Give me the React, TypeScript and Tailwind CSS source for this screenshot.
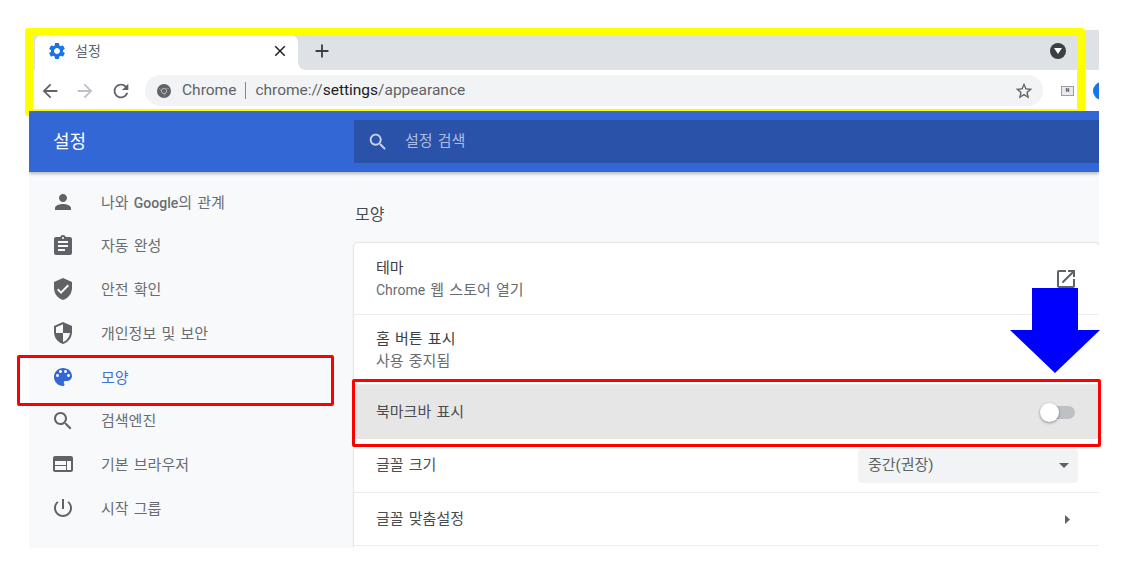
const ICONS = {
  person: 'M12 12c2.21 0 4-1.79 4-4s-1.79-4-4-4-4 1.79-4 4 1.79 4 4 4zm0 2c-2.67 0-8 1.34-8 4v2h16v-2c0-2.66-5.33-4-8-4z',
  assignment:
    'M19 3h-4.18C14.4 1.84 13.3 1 12 1c-1.3 0-2.4.84-2.82 2H5c-1.1 0-2 .9-2 2v14c0 1.1.9 2 2 2h14c1.1 0 2-.9 2-2V5c0-1.1-.9-2-2-2zm-7 0c.55 0 1 .45 1 1s-.45 1-1 1-1-.45-1-1 .45-1 1-1zm2 14H7v-2h7v2zm3-4H7v-2h10v2zm0-4H7V7h10v2z',
  verified:
    'M12 1L3 5v6c0 5.55 3.84 10.74 9 12 5.16-1.26 9-6.45 9-12V5l-9-4zm-2 16l-4-4 1.41-1.41L10 14.17l6.59-6.59L18 9l-8 8z',
  security:
    'M12 1L3 5v6c0 5.55 3.84 10.74 9 12 5.16-1.26 9-6.45 9-12V5l-9-4zm0 10.99h7c-.53 4.12-3.28 7.79-7 8.94V12H5V6.3l7-3.11v8.8z',
  palette:
    'M12 3c-4.97 0-9 4.03-9 9s4.03 9 9 9c.83 0 1.5-.67 1.5-1.5 0-.39-.15-.74-.39-1.01-.23-.26-.38-.61-.38-.99 0-.83.67-1.5 1.5-1.5H16c2.76 0 5-2.24 5-5 0-4.42-4.03-8-9-8zm-5.5 9c-.83 0-1.5-.67-1.5-1.5S5.67 9 6.5 9 8 9.67 8 10.5 7.33 12 6.5 12zm3-4C8.67 8 8 7.33 8 6.5S8.67 5 9.5 5s1.5.67 1.5 1.5S10.33 8 9.5 8zm5 0c-.83 0-1.5-.67-1.5-1.5S13.67 5 14.5 5s1.5.67 1.5 1.5S15.33 8 14.5 8zm3 4c-.83 0-1.5-.67-1.5-1.5S16.67 9 17.5 9s1.5.67 1.5 1.5-.67 1.5-1.5 1.5z',
  search:
    'M15.5 14h-.79l-.28-.27C15.41 12.59 16 11.11 16 9.5 16 5.91 13.09 3 9.5 3S3 5.91 3 9.5 5.91 16 9.5 16c1.61 0 3.09-.59 4.23-1.57l.27.28v.79l5 4.99L20.49 19l-4.99-5zm-6 0C7.01 14 5 11.99 5 9.5S7.01 5 9.5 5 14 7.01 14 9.5 11.99 14 9.5 14z',
  web: 'M20 4H4c-1.1 0-1.99.9-1.99 2L2 18c0 1.1.9 2 2 2h16c1.1 0 2-.9 2-2V6c0-1.1-.9-2-2-2zm-5 14H4v-4h11v4zm0-5H4V9h11v4zm5 5h-4V9h4v9z',
  power:
    'M13 3h-2v10h2V3zm4.83 2.17l-1.42 1.42C17.99 7.86 19 9.81 19 12c0 3.87-3.13 7-7 7s-7-3.13-7-7c0-2.19 1.01-4.14 2.58-5.42L6.17 5.17C4.23 6.82 3 9.26 3 12c0 4.97 4.03 9 9 9s9-4.03 9-9c0-2.74-1.23-5.18-3.17-6.83z',
  gear: 'M19.14 12.94c.04-.3.06-.61.06-.94 0-.32-.02-.64-.07-.94l2.03-1.58a.49.49 0 0 0 .12-.61l-1.92-3.32a.488.488 0 0 0-.59-.22l-2.39.96c-.5-.38-1.03-.7-1.62-.94l-.36-2.54a.484.484 0 0 0-.48-.41h-3.84c-.24 0-.43.17-.47.41l-.36 2.54c-.59.24-1.13.57-1.62.94l-2.39-.96c-.22-.08-.47 0-.59.22L2.74 8.87c-.12.21-.08.47.12.61l2.03 1.58c-.05.3-.09.63-.09.94s.02.64.07.94l-2.03 1.58a.49.49 0 0 0-.12.61l1.92 3.32c.12.22.37.29.59.22l2.39-.96c.5.38 1.03.7 1.62.94l.36 2.54c.05.24.24.41.48.41h3.84c.24 0 .44-.17.47-.41l.36-2.54c.59-.24 1.13-.56 1.62-.94l2.39.96c.22.08.47 0 .59-.22l1.92-3.32c.12-.22.07-.47-.12-.61l-2.01-1.58zM12 15.6c-1.98 0-3.6-1.62-3.6-3.6s1.62-3.6 3.6-3.6 3.6 1.62 3.6 3.6-1.62 3.6-3.6 3.6z',
  external:
    'M19 19H5V5h7V3H5c-1.11 0-2 .9-2 2v14c0 1.1.89 2 2 2h14c1.1 0 2-.9 2-2v-7h-2v7zM14 3v2h3.59l-9.83 9.83 1.41 1.41L19 6.41V10h2V3h-7z',
  back: 'M20 11H7.83l5.59-5.59L12 4l-8 8 8 8 1.41-1.41L7.83 13H20v-2z',
  forward: 'M12 4l-1.41 1.41L16.17 11H4v2h12.17l-5.58 5.59L12 20l8-8z',
  reload:
    'M17.65 6.35C16.2 4.9 14.21 4 12 4c-4.42 0-7.99 3.58-7.99 8s3.57 8 7.99 8c3.73 0 6.84-2.55 7.73-6h-2.08c-.82 2.33-3.04 4-5.65 4-3.31 0-6-2.69-6-6s2.69-6 6-6c1.66 0 3.14.69 4.22 1.78L13 11h7V4l-2.35 2.35z',
  star: 'M22 9.24l-7.19-.62L12 2 9.19 8.63 2 9.24l5.46 4.73L5.82 21 12 17.27 18.18 21l-1.63-7.03L22 9.24zM12 15.4l-3.76 2.27 1-4.28-3.32-2.88 4.38-.38L12 6.1l1.71 4.04 4.38.38-3.32 2.88 1 4.28L12 15.4z',
  close: 'M19 6.41L17.59 5 12 10.59 6.41 5 5 6.41 10.59 12 5 17.59 6.41 19 12 13.41 17.59 19 19 17.59 13.41 12z',
  plus: 'M19 13h-6v6h-2v-6H5v-2h6V5h2v6h6v2z',
};

function Icon({ name, className }: { name: keyof typeof ICONS; className: string }) {
  return (
    <svg viewBox="0 0 24 24" fill="currentColor" className={className}>
      <path d={ICONS[name]} />
    </svg>
  );
}

const NAV: { icon: keyof typeof ICONS; label: React.ReactNode; active?: boolean }[] = [
  {
    icon: 'person',
    label: (
      <>
        나와 <span className="text-[14px] font-medium">Google</span>의 관계
      </>
    ),
  },
  { icon: 'assignment', label: '자동 완성' },
  { icon: 'verified', label: '안전 확인' },
  { icon: 'security', label: '개인정보 및 보안' },
  { icon: 'palette', label: '모양', active: true },
  { icon: 'search', label: '검색엔진' },
  { icon: 'web', label: '기본 브라우저' },
  { icon: 'power', label: '시작 그룹' },
];

function TabStrip() {
  return (
    <div className="flex h-[40px] items-end bg-[#dee1e6] pl-[6px]">
      <div className="flex h-[35px] w-[263px] items-center rounded-t-lg bg-white pb-[3px] pl-[12px] pr-[9px]">
        <Icon name="gear" className="h-[20px] w-[20px] text-[#1a73e8]" />
        <span className="ml-[8px] flex-1 text-[14px] text-[#5f6368]">설정</span>
        <Icon name="close" className="h-[18px] w-[18px] text-[#202124]" />
      </div>
      <div className="relative flex h-[35px] flex-1 items-center pb-[3px] pl-[13px]">
        {/* white notch behind the strip's rounded corner next to the tab */}
        <div className="absolute bottom-0 left-0 h-[8px] w-[8px] bg-white" />
        <div className="absolute bottom-0 left-0 h-[8px] w-[8px] rounded-bl-lg bg-[#dee1e6]" />
        <Icon name="plus" className="h-[22px] w-[22px] text-[#3c4043]" />
        <div className="ml-auto mr-[33px] flex h-[16px] w-[16px] items-center justify-center rounded-full bg-[#3c4043]">
          <svg viewBox="0 0 8 6" className="h-[6px] w-[8px]">
            <path d="M0 0h8L4 6z" fill="#fff" />
          </svg>
        </div>
      </div>
    </div>
  );
}

function Toolbar() {
  return (
    <div className="flex h-[41px] items-start overflow-hidden bg-white pt-[5px]">
      <div className="flex h-[31px] w-[116px] shrink-0 items-center pl-[10px]">
        <Icon name="back" className="h-[22px] w-[22px] text-[#5f6368]" />
        <Icon name="forward" className="ml-[13px] h-[22px] w-[22px] text-[#bdc1c6]" />
        <Icon name="reload" className="ml-[14px] h-[22px] w-[22px] text-[#5f6368]" />
      </div>
      <div className="flex h-[31px] w-[898px] shrink-0 items-center rounded-full bg-[#f1f3f4] pl-[12px] pr-[9px] text-[15.5px]">
        <svg viewBox="0 0 16 16" className="h-[14px] w-[14px]">
          <circle cx="8" cy="8" r="8" fill="#5f6368" />
          <circle cx="8" cy="8" r="3" fill="none" stroke="#c4c7ca" strokeWidth="1" />
          <path d="M8 5h6M5.5 9.5L2.6 4.4M10.5 9.5L7.6 14.6" stroke="#9aa0a6" strokeWidth="0.8" />
        </svg>
        <span className="ml-[11px] text-[#5f6368]">Chrome</span>
        <span className="ml-[9px] h-[17px] w-px bg-[#80868b]" />
        <span className="ml-[9px] text-[#5f6368]">
          chrome://<span className="text-[#202124]">settings</span>/appearance
        </span>
        <Icon name="star" className="ml-auto h-[20px] w-[20px] text-[#5f6368]" />
      </div>
      <div className="flex h-[31px] flex-1 items-center pl-[18px]">
        <div className="flex h-[10px] w-[13px] shrink-0 items-center justify-center border border-[#9aa0a6] bg-[#e8eaed] text-[5px] leading-none font-bold text-[#3c4043]">
          N
        </div>
        <div className="ml-[19px] h-[18px] w-[18px] shrink-0 rounded-full bg-[#1a73e8]" />
      </div>
    </div>
  );
}

function Header() {
  return (
    <div className="relative z-10 flex h-[61px] items-center bg-[#3367d6] shadow-[0_2px_3px_rgba(0,0,0,0.25)]">
      <div className="w-[325px] pl-[24px] text-[18px] text-white">설정</div>
      <div className="flex h-[43px] flex-1 items-center bg-[#2a52a9] pl-[13px]">
        <Icon name="search" className="h-[22px] w-[22px] text-[#c9d4ee]" />
        <span className="ml-[16px] text-[15px] text-[#aebce0] [word-spacing:1.5px]">설정 검색</span>
      </div>
    </div>
  );
}

function Sidebar() {
  return (
    <nav className="flex w-[325px] flex-col pt-[8px]">
      {NAV.map((item, i) => (
        <div key={i} className="flex h-[43.75px] items-center pl-[22px]">
          <Icon
            name={item.icon}
            className={`h-[24px] w-[24px] ${item.active ? 'text-[#3367d6]' : 'text-[#5f6368]'}`}
          />
          <span
            className={`ml-[26px] pt-[2px] text-[15px] [word-spacing:1.5px] ${item.active ? 'text-[#3f73dc]' : 'text-[#696d72]'}`}
          >
            {item.label}
          </span>
        </div>
      ))}
    </nav>
  );
}

function TwoLineRow({ title, sub, children }: { title: string; sub: React.ReactNode; children?: React.ReactNode }) {
  return (
    <div className="flex h-full items-center border-b border-[#eceded] pl-[22px] pr-[21px]">
      <div className="flex-1 text-[15px] [word-spacing:1.5px]">
        <div className="leading-[22px] text-[#3c4043]">{title}</div>
        <div className="leading-[22px] text-[#696d72]">{sub}</div>
      </div>
      {children}
    </div>
  );
}

function Content() {
  return (
    <div className="flex flex-1 flex-col">
      <h2 className="h-[71px] pl-px pt-[33px] text-[16px] leading-[20px] font-normal text-[#4a4d50]">모양</h2>
      <div className="flex-1 rounded-t-[4px] bg-white shadow-[0_0_2px_rgba(60,64,67,0.35)]">
        <div className="h-[72px]">
          <TwoLineRow
            title="테마"
            sub={
              <>
                <span className="text-[14px]">Chrome</span> 웹 스토어 열기
              </>
            }
          >
            <Icon name="external" className="h-[24px] w-[24px] text-[#5f6368]" />
          </TwoLineRow>
        </div>
        <div className="h-[70px]">
          <TwoLineRow title="홈 버튼 표시" sub="사용 중지됨" />
        </div>
        <div className="flex h-[54px] items-center bg-[#e6e6e6] pl-[22px] pr-[24px]">
          <span className="flex-1 text-[15px] text-[#4a4d50] [word-spacing:1.5px]">북마크바 표시</span>
          <div className="relative h-[13px] w-[33px] rounded-full bg-[#bdc1c6]">
            <div className="absolute -left-[2px] -top-[3px] h-[19px] w-[19px] rounded-full bg-white shadow-[0_1px_3px_rgba(0,0,0,0.4)]" />
          </div>
        </div>
        <div className="flex h-[54px] items-center border-b border-[#eceded] pl-[22px] pr-[21px]">
          <span className="flex-1 text-[15px] text-[#4a4d50] [word-spacing:1.5px]">글꼴 크기</span>
          <div className="flex h-[35px] w-[220px] items-center justify-between rounded-[4px] bg-[#f1f3f4] pl-[10px] pr-[9px] text-[15px] text-[#5f6368]">
            중간(권장)
            <svg viewBox="0 0 10 5" className="h-[5px] w-[10px]">
              <path d="M0 0h10L5 5z" fill="#5f6368" />
            </svg>
          </div>
        </div>
        <div className="flex h-[53px] items-center border-b border-[#eceded] pl-[22px] pr-[29px]">
          <span className="flex-1 text-[15px] text-[#4a4d50] [word-spacing:1.5px]">글꼴 맞춤설정</span>
          <svg viewBox="0 0 5 9" className="h-[9px] w-[5px]">
            <path d="M0 0l5 4.5L0 9z" fill="#5f6368" />
          </svg>
        </div>
      </div>
    </div>
  );
}

export default function App() {
  return (
    <div className="relative h-[580px] w-[1122px] overflow-hidden bg-white font-['Roboto','Noto_Sans_CJK_KR',sans-serif]">
      <div className="ml-[29px] mt-[30px] flex h-[518px] w-[1070px] flex-col overflow-hidden">
        <TabStrip />
        <Toolbar />
        <Header />
        <div className="flex flex-1 bg-[#f8f9fa]">
          <Sidebar />
          <Content />
        </div>
      </div>

      {/* annotations drawn over the screenshot */}
      <div className="absolute left-[25px] top-[28px] h-[88px] w-[1060px] rounded-[3px] border-x-[8px] border-y-[7px] border-[#ffff00]" />
      <div className="absolute left-[17px] top-[355px] h-[51px] w-[317px] rounded-[2px] border-[3px] border-[#ff0000]" />
      <div className="absolute left-[352px] top-[379px] h-[68px] w-[749px] rounded-[2px] border-[3px] border-[#ff0000]" />
      <svg viewBox="0 0 90 85" className="absolute left-[1010px] top-[288px] h-[85px] w-[90px]">
        <path d="M22 0h46v42h22L45 85 0 42h22z" fill="#0000ff" />
      </svg>
    </div>
  );
}
